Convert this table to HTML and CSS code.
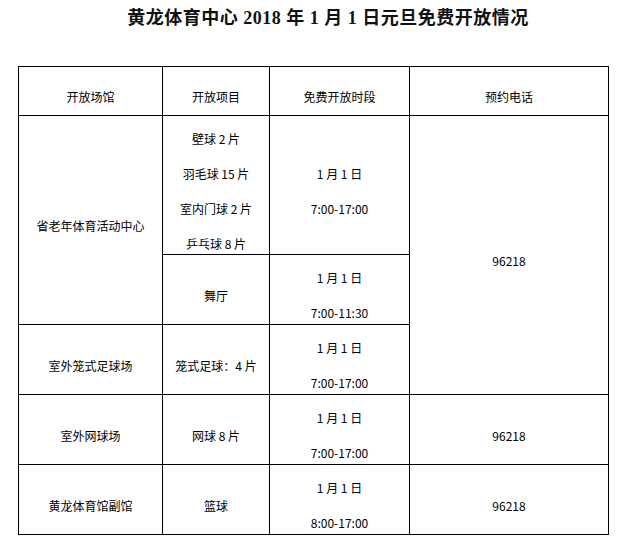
FILE: index.html
```html
<!DOCTYPE html>
<html lang="zh-CN">
<head>
<meta charset="utf-8">
<title>黄龙体育中心2018年1月1日元旦免费开放情况</title>
<link rel="stylesheet" href="styles.css">
</head>
<body>
<div class="page">
  <h1 class="title">黄龙体育中心 2018 年 1 月 1 日元旦免费开放情况</h1>
  <table class="schedule">
    <colgroup>
      <col class="c1"><col class="c2"><col class="c3"><col class="c4">
    </colgroup>
    <tr class="head">
      <td>开放场馆</td>
      <td>开放项目</td>
      <td>免费开放时段</td>
      <td>预约电话</td>
    </tr>
    <tr class="tall">
      <td rowspan="2">省老年体育活动中心</td>
      <td><div class="stack"><span>壁球 2 片</span><span>羽毛球 15 片</span><span>室内门球 2 片</span><span>乒乓球 8 片</span></div></td>
      <td><div class="stack"><span>1 月 1 日</span><span>7:00-17:00</span></div></td>
      <td rowspan="3">96218</td>
    </tr>
    <tr class="row">
      <td>舞厅</td>
      <td><div class="stack"><span>1 月 1 日</span><span>7:00-11:30</span></div></td>
    </tr>
    <tr class="row">
      <td>室外笼式足球场</td>
      <td>笼式足球：4 片</td>
      <td><div class="stack"><span>1 月 1 日</span><span>7:00-17:00</span></div></td>
    </tr>
    <tr class="row">
      <td>室外网球场</td>
      <td>网球 8 片</td>
      <td><div class="stack"><span>1 月 1 日</span><span>7:00-17:00</span></div></td>
      <td>96218</td>
    </tr>
    <tr class="row">
      <td>黄龙体育馆副馆</td>
      <td>篮球</td>
      <td><div class="stack"><span>1 月 1 日</span><span>8:00-17:00</span></div></td>
      <td>96218</td>
    </tr>
  </table>
</div>
</body>
</html>
```

FILE: styles.css
```css
html, body {
  margin: 0;
  padding: 0;
  background: #ffffff;
}

body {
  font-family: "Noto Sans CJK SC", "Noto Sans", sans-serif;
  color: #000;
  font-size: 12px;
}

.page {
  width: 626px;
  height: 553px;
  overflow: hidden;
}

.title {
  margin: 0 0 35px;
  padding: 5px 0 0 30px;
  font-family: "Liberation Serif", "Noto Sans CJK SC", serif;
  font-size: 18px;
  font-weight: bold;
  line-height: 26px;
  text-align: center;
  letter-spacing: 0.5px;
  color: #111;
}

.schedule {
  margin-left: 18px;
  width: 590px;
  border-collapse: collapse;
  table-layout: fixed;
}

.c1 { width: 144px; }
.c2 { width: 107px; }
.c3 { width: 140px; }
.c4 { width: 199px; }

.schedule td {
  border: 1px solid #000;
  padding: 12px 2px 0;
  text-align: center;
  vertical-align: middle;
  line-height: 14px;
  font-size: 12px;
  box-sizing: border-box;
}

.head td { height: 49px; }
.tall td { height: 139px; }
.row td { height: 70px; }

.stack {
  display: flex;
  flex-direction: column;
  align-items: center;
  gap: 21px;
}
```
